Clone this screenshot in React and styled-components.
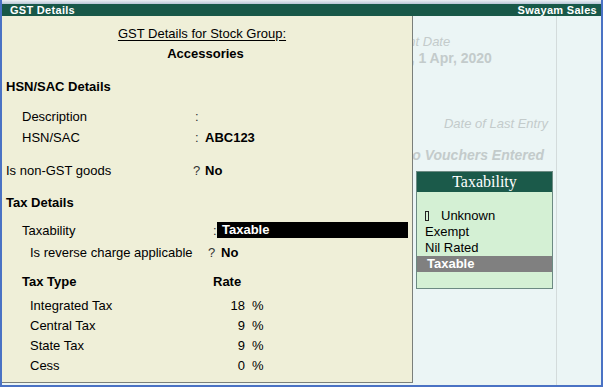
import styled, { createGlobalStyle } from "styled-components"

const GlobalStyle = createGlobalStyle`
  html, body {
    margin: 0;
    padding: 0;
    background: #ebf5f5;
  }
  body {
    font-family: "Liberation Sans", Arial, sans-serif;
  }
`

const Frame = styled.div`
  width: 603px;
  height: 387px;
  box-sizing: border-box;
  border: 2px solid #4a72c4;
  border-top: none;
  display: flex;
  flex-direction: column;
  overflow: hidden;
  background: #ebf5f5;
`

const TopStrip = styled.div`
  height: 4px;
  background: linear-gradient(#eef1f4, #b9c6d6);
`

const TitleBar = styled.div`
  height: 12px;
  background: #185848;
  color: #ffffff;
  font-size: 11px;
  font-weight: bold;
  line-height: 12px;
  padding: 0 4px 0 8px;
  display: flex;
  justify-content: space-between;
  letter-spacing: 0.3px;
`

const Body = styled.div`
  flex: 1;
  position: relative;
  display: flex;
`

const Main = styled.div`
  flex: 1;
  border-right: 1px solid #d3dbdb;
  padding: 18px 6px 0 0;
  font-size: 13px;
  line-height: 16px;
  color: #c3cbcb;
`

const Halves = styled.div`
  display: grid;
  grid-template-columns: 1fr 1fr;
`

const Ghost = styled.div`
  text-align: ${(p) => p.$align || "center"};
  font-size: ${(p) => p.$size || 13}px;
  font-style: ${(p) => (p.$italic ? "italic" : "normal")};
  font-weight: ${(p) => (p.$bold ? "bold" : "normal")};
  margin-top: ${(p) => p.$mt || 0}px;
  margin-right: ${(p) => p.$mr || 0}px;
`

const SideCol = styled.div`
  width: 44px;
`

/* GST details popup over the gateway */
const Panel = styled.div`
  position: absolute;
  left: 0;
  top: 0;
  width: 411px;
  height: 367px;
  box-sizing: border-box;
  background: #efefd8;
  border-right: 1px solid #7a7f7a;
  border-bottom: 1px solid #7a7f7a;
  padding: 8px 0 0 4px;
  font-size: 13px;
  color: #000;
`

const Caption = styled.div`
  width: 392px;
  height: 20px;
  line-height: 20px;
  text-align: center;
  padding-left: ${(p) => p.$shift || 0}px;
  box-sizing: border-box;
  font-weight: ${(p) => (p.$bold ? "bold" : "normal")};
  text-decoration: ${(p) => (p.$underline ? "underline" : "none")};
  text-underline-offset: 2px;
`

const Row = styled.div`
  display: flex;
  align-items: center;
  height: 20px;
  margin-top: ${(p) => p.$mt || 0}px;
`

const Heading = styled(Row)`
  font-weight: bold;
  padding-left: ${(p) => p.$indent || 0}px;
`

const Label = styled.div`
  flex-shrink: 0;
  box-sizing: border-box;
  width: ${(p) => p.$w}px;
  padding-left: ${(p) => p.$indent || 0}px;
  font-weight: ${(p) => (p.$bold ? "bold" : "normal")};
`

const Sep = styled.div`
  flex-shrink: 0;
  width: ${(p) => p.$w}px;
  color: #333;
`

const Value = styled.div`
  font-weight: bold;
`

const Selected = styled.div`
  width: 186px;
  height: 16px;
  line-height: 16px;
  padding-left: 5px;
  background: #000;
  color: #fff;
  font-weight: bold;
`

const Rate = styled.div`
  width: 30px;
  text-align: right;
`

const Pct = styled.div`
  margin-left: 7px;
`

/* Taxability list */
const ListBox = styled.div`
  position: absolute;
  left: 414px;
  top: 155px;
  width: 137px;
  height: 118px;
  box-sizing: border-box;
  border: 1px solid #6c8a82;
  background: #d4f0d4;
  font-size: 13px;
`

const ListHead = styled.div`
  height: 20px;
  line-height: 20px;
  background: #1b5a4a;
  color: #fff;
  text-align: center;
  font-family: "Liberation Serif", "Times New Roman", serif;
  font-size: 16px;
`

const Items = styled.div`
  padding-top: 16px;
`

const Item = styled.div`
  height: 16px;
  line-height: 16px;
  display: flex;
  align-items: center;
  padding-left: ${(p) => (p.$active ? 10 : 8)}px;
  background: ${(p) => (p.$active ? "#808080" : "transparent")};
  color: ${(p) => (p.$active ? "#fff" : "#000")};
  font-weight: ${(p) => (p.$active ? "bold" : "normal")};
`

const Mark = styled.span`
  display: inline-block;
  width: 2px;
  height: 8px;
  border: 1px solid #222;
  margin-right: 12px;
`

const fields = [
  { name: "Integrated Tax", rate: 18 },
  { name: "Central Tax", rate: 9 },
  { name: "State Tax", rate: 9 },
  { name: "Cess", rate: 0 },
]

const options = ["Unknown", "Exempt", "Nil Rated", "Taxable"]

export default function App() {
  return (
    <>
      <GlobalStyle />
      <Frame>
        <TopStrip />
        <TitleBar>
          <span>GST Details</span>
          <span>Swayam Sales</span>
        </TitleBar>
        <Body>
          <Main>
            <Halves>
              <div />
              <div>
                <Ghost $italic>Current Date</Ghost>
                <Ghost $bold $size={14}>Wednesday, 1 Apr, 2020</Ghost>
              </div>
            </Halves>
            <Ghost $italic $align="right" $mt={50} $mr={2}>
              Date of Last Entry
            </Ghost>
            <Ghost $italic $bold $size={14} $align="right" $mt={15} $mr={6}>
              No Vouchers Entered
            </Ghost>
          </Main>
          <SideCol />

          <Panel>
            <Caption $underline>GST Details for Stock Group:</Caption>
            <Caption $bold $shift={7}>Accessories</Caption>

            <Heading $mt={12}>HSN/SAC Details</Heading>
            <Row $mt={10}>
              <Label $indent={16} $w={189}>Description</Label>
              <Sep $w={10}>:</Sep>
            </Row>
            <Row $mt={1}>
              <Label $indent={16} $w={189}>HSN/SAC</Label>
              <Sep $w={10}>:</Sep>
              <Value>ABC123</Value>
            </Row>
            <Row $mt={13}>
              <Label $w={187}>Is non-GST goods</Label>
              <Sep $w={12}>?</Sep>
              <Value>No</Value>
            </Row>

            <Heading $mt={12}>Tax Details</Heading>
            <Row $mt={8}>
              <Label $indent={16} $w={207}>Taxability</Label>
              <Sep $w={4}>:</Sep>
              <Selected>Taxable</Selected>
            </Row>
            <Row $mt={2}>
              <Label $indent={24} $w={202}>Is reverse charge applicable</Label>
              <Sep $w={13}>?</Sep>
              <Value>No</Value>
            </Row>

            <Row $mt={9}>
              <Label $indent={16} $w={207} $bold>Tax Type</Label>
              <Value>Rate</Value>
            </Row>
            {fields.map((f, i) => (
              <Row key={f.name} $mt={i === 0 ? 4 : 0}>
                <Label $indent={24} $w={209}>{f.name}</Label>
                <Rate>{f.rate}</Rate>
                <Pct>%</Pct>
              </Row>
            ))}
          </Panel>

          <ListBox>
            <ListHead>Taxability</ListHead>
            <Items>
              {options.map((o) => (
                <Item key={o} $active={o === "Taxable"}>
                  {o === "Unknown" && <Mark />}
                  {o}
                </Item>
              ))}
            </Items>
          </ListBox>
        </Body>
      </Frame>
    </>
  )
}
